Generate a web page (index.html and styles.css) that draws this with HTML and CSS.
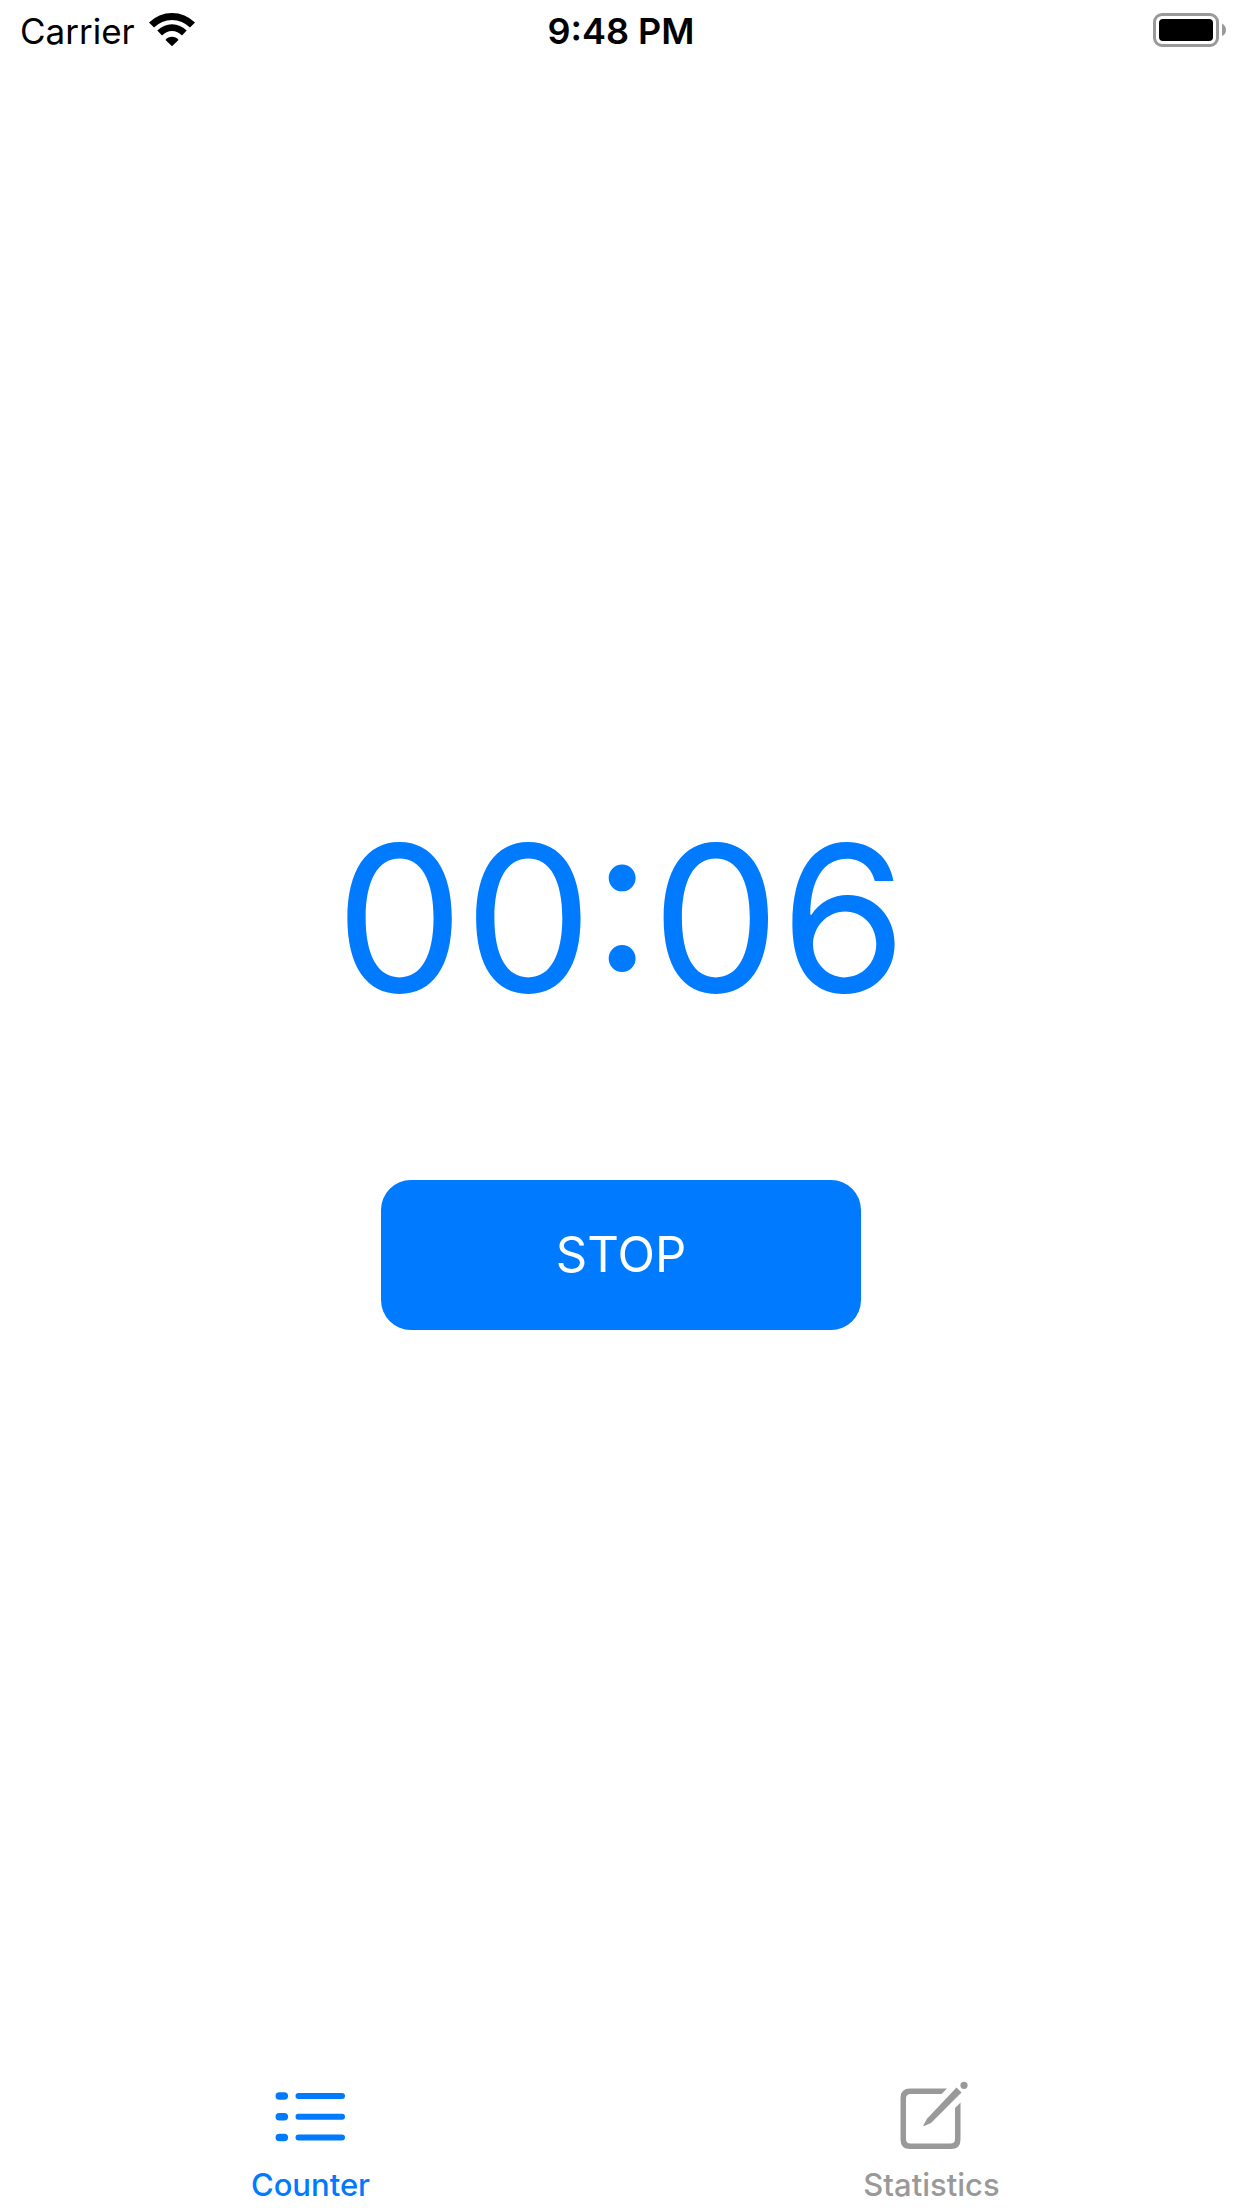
FILE: index.html
```html
<!DOCTYPE html>
<html lang="en">
<head>
<meta charset="utf-8">
<meta name="viewport" content="width=device-width, initial-scale=1">
<title>Counter</title>
<link rel="stylesheet" href="styles.css">
</head>
<body>
<header class="status">
  <div class="carrier">
    <span class="status-text">Carrier</span>
    <svg class="wifi" viewBox="0 0 46 34" aria-hidden="true">
      <path d="M0 9.500A32.600 32.600 0 0 1 46 9.500L41 14.500A25.400 25.400 0 0 0 5 14.500Z"/>
      <path d="M8.300 17.500A20.500 20.500 0 0 1 37.700 17.500L33 22.500A13.400 13.400 0 0 0 13 22.500Z"/>
      <path d="M16.500 27A8 8 0 0 1 29.500 27L23 33.300Z"/>
    </svg>
  </div>
  <time class="clock status-text">9:48 PM</time>
  <svg class="battery" viewBox="0 0 74 34" role="img" aria-label="Battery full">
    <rect x="1.500" y="1.500" width="63" height="31" rx="7.500" fill="none" stroke="#999" stroke-width="3"/>
    <rect x="6" y="6" width="54" height="22" rx="4"/>
    <path d="M69 10.500Q73 12.500 73 17T69 23Z" fill="#999"/>
  </svg>
</header>
<main class="counter">
  <div class="timer" role="timer">00:06</div>
  <button class="stop" type="button">STOP</button>
</main>
<nav class="tabs">
  <a class="tab active" href="#counter" aria-current="page">
    <svg class="icon" viewBox="0 0 72 72" fill="none" stroke="currentColor" stroke-linecap="round" aria-hidden="true">
      <path stroke-width="7.500" d="M4.300 15H9.300M4.300 35.700H9.300M4.300 56.500H9.300"/>
      <path stroke-width="6" d="M23.500 15H67M23.500 35.700H67M23.500 56.500H67"/>
    </svg>
    <span>Counter</span>
  </a>
  <a class="tab" href="#statistics">
    <svg class="icon" viewBox="0 0 72 72" fill="currentColor" aria-hidden="true">
      <path d="M51 7.500H14Q4.500 7.500 4.500 17V58.500Q4.500 68 14 68H55Q64.500 68 64.500 58.500V21.500L59 27V58Q59 62.500 54.500 62.500H14.500Q10 62.500 10 58V17.500Q10 13 14.500 13H45.500Z"/>
      <path d="M60.500 6.500L65.500 11.500L35 42L27.500 45.200L27.300 44.500L31 37.800Z"/>
      <circle cx="68" cy="4.300" r="3.600"/>
    </svg>
    <span>Statistics</span>
  </a>
</nav>
</body>
</html>
```
FILE: styles.css
```css
* { box-sizing: border-box; }
body {
  margin: 0;
  min-height: 100vh;
  display: flex;
  flex-direction: column;
  background: #fff;
  color: #000;
  font-family: Inter, "Liberation Sans", sans-serif;
}
.status {
  display: grid;
  grid-template-columns: 1fr auto 1fr;
  align-items: center;
  height: 60px;
  padding: 0 15px;
  font-size: 35px;
}
.status-text { padding-top: 2px; }
.carrier { display: flex; align-items: center; gap: 14px; padding-left: 5px; }
.wifi { width: 46px; height: 34px; }
.clock { font-size: 36px; font-weight: 600; }
.battery { width: 74px; height: 34px; justify-self: end; }
.counter {
  flex: 1;
  display: flex;
  flex-direction: column;
  align-items: center;
  justify-content: center;
  gap: 136px;
}
.timer { color: #007aff; font-size: 204px; line-height: 252px; }
.stop {
  width: 480px;
  height: 150px;
  border: 0;
  border-radius: 30px;
  background: #007aff;
  color: #fff;
  font: inherit;
  font-size: 49px;
}
.tabs { display: grid; grid-template-columns: 1fr 1fr; height: 147px; }
.tab {
  display: flex;
  flex-direction: column;
  align-items: center;
  gap: 14px;
  padding-top: 20px;
  color: #999;
  font-size: 31px;
  font-weight: 500;
  line-height: 36px;
  text-decoration: none;
}
.active { color: #007aff; }
.icon { width: 72px; height: 72px; overflow: visible; }
```
